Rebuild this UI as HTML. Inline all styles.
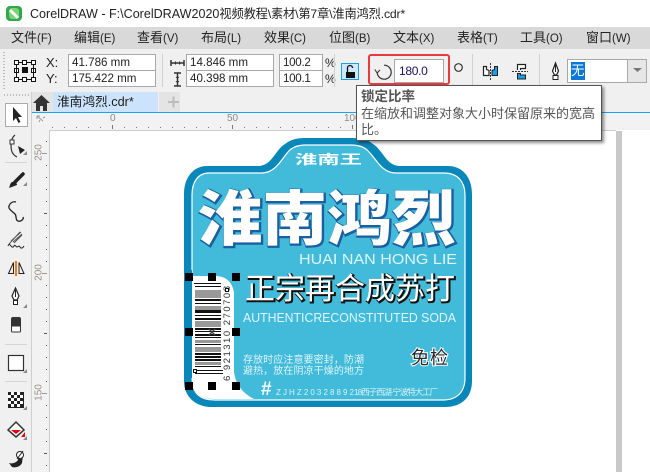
<!DOCTYPE html>
<html><head><meta charset="utf-8">
<style>
html,body{margin:0;padding:0;background:#fff}
#r{position:relative;width:650px;height:472px;overflow:hidden;background:#fff;font-family:"Liberation Sans","Noto Sans CJK SC",sans-serif;color:#222}
#r div{position:absolute;box-sizing:border-box}
.t{white-space:nowrap;font-size:13px;line-height:16px}
.m{top:30px;color:#222;font-size:13px}
.m span{font-size:11.5px}
.i{background:#fff;border:1px solid #a8a8a8;font-size:11.6px;line-height:15px;padding-left:3px;white-space:nowrap;color:#222}
svg{position:absolute;left:0;top:0}
</style></head><body>
<div id="r">
<!-- title -->
<div style="left:0;top:0;width:650px;height:27px;background:#fff"></div>
<div class="t" style="left:30px;top:6px;font-size:12.25px;letter-spacing:-.17px;color:#222"><span style="font-size:12.55px;letter-spacing:0">CorelDRAW - F:\CorelDRAW2020</span>视频教程\素材\第7章\淮南鸿烈.cdr*</div>
<!-- menu -->
<div style="left:0;top:27px;width:650px;height:22px;background:#d9d9d9"></div>
<div class="t m" style="left:11px">文件<span>(F)</span></div>
<div class="t m" style="left:74px">编辑<span>(E)</span></div>
<div class="t m" style="left:137px">查看<span>(V)</span></div>
<div class="t m" style="left:201px">布局<span>(L)</span></div>
<div class="t m" style="left:264px">效果<span>(C)</span></div>
<div class="t m" style="left:329px">位图<span>(B)</span></div>
<div class="t m" style="left:393px">文本<span>(X)</span></div>
<div class="t m" style="left:457px">表格<span>(T)</span></div>
<div class="t m" style="left:520px">工具<span>(O)</span></div>
<div class="t m" style="left:586px">窗口<span>(W)</span></div>
<!-- prop bar -->
<div style="left:0;top:49px;width:650px;height:43px;background:#f0f0f0"></div>
<div class="t" style="left:46px;top:55px">X:</div>
<div class="t" style="left:46px;top:71px">Y:</div>
<div class="i" style="left:68px;top:54px;width:88px;height:17px">41.786 mm</div>
<div class="i" style="left:68px;top:70px;width:88px;height:17px">175.422 mm</div>
<div class="i" style="left:186px;top:54px;width:88px;height:17px">14.846 mm</div>
<div class="i" style="left:186px;top:70px;width:88px;height:17px">40.398 mm</div>
<div class="i" style="left:279px;top:54px;width:44px;height:17px;letter-spacing:-.3px">100.2</div>
<div class="i" style="left:279px;top:70px;width:44px;height:17px;letter-spacing:-.3px">100.1</div>
<div class="t" style="left:325px;top:55px;font-size:12px">%</div>
<div class="t" style="left:325px;top:71px;font-size:12px">%</div>
<div style="left:341px;top:63px;width:18px;height:17px;background:#cde8fb;border:1px solid #1a9fe0"></div>
<div style="left:368px;top:54px;width:82px;height:31px;border:2px solid #ea3a3f;border-radius:3px;background:#f0f0f0"></div>
<div class="i" style="left:394px;top:59px;width:50px;height:24px;line-height:22px;padding-left:4px;font-size:12px;letter-spacing:-.3px;color:#1a1060">180.0</div>
<div style="left:567px;top:59px;width:61px;height:24px;background:#fff;border:1px solid #a8a8a8"></div>
<div class="t" style="left:571px;top:62px;width:14px;height:18px;background:#0a78d7;color:#fff;line-height:18px;font-size:13.5px">无</div>
<div style="left:628px;top:59px;width:19px;height:24px;background:#e6e6e6;border:1px solid #a8a8a8;border-left:0"></div>
<!-- tabs -->
<div style="left:0;top:92px;width:650px;height:21px;background:#f0f0f0"></div>
<div style="left:32px;top:92px;width:21px;height:20px;background:#e4e4e4"></div>
<div style="left:53px;top:92px;width:105px;height:20px;background:#cce4fb"></div>
<div class="t" style="left:57px;top:94px;font-size:12.7px;color:#1a1a1a">淮南鸿烈.cdr*</div>
<div style="left:159px;top:92px;width:21px;height:20px;background:#e4e4e4"></div>
<div style="left:32px;top:112px;width:618px;height:1px;background:#18a4ee"></div>
<!-- rulers -->
<div style="left:0;top:113px;width:32px;height:359px;background:#f0f0f0"></div>
<div style="left:32px;top:113px;width:618px;height:17px;background:#f2f2f2"></div>
<div style="left:32px;top:113px;width:17px;height:359px;background:#f2f2f2"></div>
<div style="left:31px;top:92px;width:1px;height:380px;background:#cfcfcf"></div>
<div style="left:49px;top:130px;width:601px;height:342px;background:#fff"></div>
<div style="left:49px;top:130px;width:1px;height:342px;background:#cccccc"></div>
<div style="left:49px;top:130px;width:567px;height:1px;background:#cccccc"></div>
<div style="left:616px;top:131px;width:6px;height:341px;background:#c9c9c9"></div>
<div class="t" style="left:110px;top:113px;font-size:10px;line-height:11px;color:#8a8a8a">0</div>
<div class="t" style="left:227px;top:113px;font-size:10px;line-height:11px;color:#8a8a8a">50</div>
<div class="t" style="left:344px;top:113px;font-size:10px;line-height:11px;color:#8a8a8a">100</div>
<div class="t" style="left:24px;top:147px;width:30px;text-align:center;font-size:10px;line-height:11px;color:#9a8f8f;transform:rotate(-90deg)">250</div>
<div class="t" style="left:24px;top:267px;width:30px;text-align:center;font-size:10px;line-height:11px;color:#9a8f8f;transform:rotate(-90deg)">200</div>
<div class="t" style="left:24px;top:387px;width:30px;text-align:center;font-size:10px;line-height:11px;color:#9a8f8f;transform:rotate(-90deg)">150</div>

<svg width="650" height="472" viewBox="0 0 650 472" style="font-family:'Liberation Sans','Noto Sans CJK SC',sans-serif">
<!-- app icon -->
<rect x="6" y="6" width="16" height="15" rx="4" fill="#2fa84a"/>
<rect x="9" y="8" width="10" height="11" rx="3" fill="#7fd07a"/>
<path d="M10 10L18 18" stroke="#fff" stroke-width="3"/>
<!-- grip -->
<path d="M4 52V90" stroke="#bdbdbd" stroke-dasharray="1 2" stroke-width="2"/>
<path d="M4 95H30" stroke="#bdbdbd" stroke-dasharray="1 2" stroke-width="2"/>
<!-- reference point -->
<g fill="#fff" stroke="#111" stroke-width="1">
<rect x="14.5" y="60.5" width="4" height="4"/><rect x="22.5" y="60.5" width="4" height="4"/><rect x="31.5" y="60.5" width="4" height="4"/>
<rect x="14.5" y="68.5" width="4" height="4"/><rect x="31.5" y="68.5" width="4" height="4"/>
<rect x="14.5" y="77.5" width="4" height="4"/><rect x="22.5" y="77.5" width="4" height="4"/><rect x="31.5" y="77.5" width="4" height="4"/>
</g>
<rect x="22" y="67" width="6" height="6" fill="#111"/>
<path d="M18.500 62.500H22.500M26.500 62.500H31.500M16.500 64.500V77.500M33.500 64.500V77.500M18.500 79.500H22.500M26.500 79.500H31.500" stroke="#111"/>
<path d="M162.500 54V87M334.500 54V87M472.500 54V87M539.500 54V87" stroke="#d0d0d0"/>
<!-- size icons -->
<path d="M171 60V66M184 60V66M171 63H184" stroke="#333" stroke-width="1.500"/>
<path d="M174 63l2-2v4zM181 63l-2-2v4z" fill="#333"/>
<path d="M174 73H181M174 86H181M177.500 73V86" stroke="#333" stroke-width="1.500"/>
<path d="M177.500 76l-2 2h4zM177.500 83l-2-2h4z" fill="#333"/>
<!-- lock -->
<rect x="346" y="72" width="9" height="6" fill="#111"/>
<path d="M347.500 72V68a2.500 2.500 0 0 1 5 0" fill="none" stroke="#111" stroke-width="1.300"/>
<!-- rotate -->
<path d="M384 65.200A7 7 0 1 1 377.200 72" fill="none" stroke="#333" stroke-width="1.200"/>
<path d="M374.800 69.500L377.200 73L380 69.800" fill="none" stroke="#333" stroke-width="1.100"/>
<circle cx="458.500" cy="67.500" r="3.800" fill="none" stroke="#333" stroke-width="1.200"/>
<!-- mirror -->
<path d="M483.500 66.500h3v3l2.500 1v5h-5.500z" fill="#fff" stroke="#222" stroke-width="1.200"/>
<path d="M497.500 66.500h-3v3l-2.500 1v5h5.500z" fill="#18a0e8" stroke="#222" stroke-width="1"/>
<path d="M490.500 63V80" stroke="#333" stroke-dasharray="2 1"/>
<path d="M517.500 70V64.500h8v4h-5v1.500" fill="#fff" stroke="#222" stroke-width="1.200"/>
<path d="M517.500 73.500v5.500h8v-4h-5v-1.500z" fill="#18a0e8" stroke="#222" stroke-width="1"/>
<path d="M512 71.500H528" stroke="#333" stroke-dasharray="2 1"/>
<!-- pen nib -->
<path d="M555.500 63l-3 8 2 4h2l2-4z" fill="#fff" stroke="#222" stroke-width="1.200"/>
<path d="M555.500 65V72" stroke="#222"/>
<rect x="553" y="75.500" width="5" height="4" fill="#fff" stroke="#222"/>
<path d="M633 68h9l-4.500 4z" fill="#777"/>
<!-- home -->
<path d="M41.500 95L33 103h3v8h4v-5h3v5h4v-8h3z" fill="#333"/>
<rect x="168" y="101" width="11" height="2" fill="#bdbdbd"/>
<rect x="172.500" y="96.500" width="2" height="11" fill="#bdbdbd"/>
<!-- ruler ticks -->
<g stroke="#555" stroke-width="1">
<path d="M112.500 125V129M232.500 125V129M352.500 125V129" stroke="#777"/>
<path d="M52 127.500h1M64 127.500h1M76 127.500h1M88 127.500h1M100 127.500h1M124 127.500h1M136 127.500h1M148 127.500h1M160 127.500h1M172 127.500h1M184 127.500h1M196 127.500h1M208 127.500h1M220 127.500h1M244 127.500h1M256 127.500h1M268 127.500h1M280 127.500h1M292 127.500h1M304 127.500h1M316 127.500h1M328 127.500h1M340 127.500h1M364 127.500h1" stroke="#777"/>
<path d="M42 153.500h5M42 273.500h5M42 393.500h5" stroke="#999"/>
<path d="M46 141.500h1M46 165.500h1M46 177.500h1M46 189.500h1M46 201.500h1M44 213.500h3M46 225.500h1M46 237.500h1M46 249.500h1M46 261.500h1M46 285.500h1M46 297.500h1M46 309.500h1M46 321.500h1M44 333.500h3M46 345.500h1M46 357.500h1M46 369.500h1M46 381.500h1M46 405.500h1M46 417.500h1M46 429.500h1M46 441.500h1M44 453.500h3M46 465.500h1" stroke="#555"/>
</g>
<path d="M37 116l6 5M37 116h3M37 116v3M40 120l-1 2M43 118l2-1" stroke="#999" fill="none"/>
<!-- toolbox -->
<rect x="5.500" y="103.500" width="22" height="23" fill="#fff" stroke="#aaa"/>
<path d="M13 107v14l3-3 2.500 5 2-1-2.500-5h4z" fill="#222"/>
<g fill="none" stroke="#333" stroke-width="1.200">
<path d="M15 135c-4 3-5 10-3 17c1 2 3 4 5 5"/>
</g>
<rect x="10" y="140" width="4" height="4" fill="#fff" stroke="#333"/>
<path d="M18 146l7 4-5 4z" fill="#222"/>
<path d="M27 155v-4l-4 4zM27 186v-4l-4 4zM27 308v-4l-4 4zM27 373v-4l-4 4zM27 410v-4l-4 4zM27 440v-4l-4 4z" fill="#888"/>
<path d="M5 162.500H27M5 344.500H27M5 381.500H27" stroke="#d4d4d4"/>
<path d="M23 174l-8 8" stroke="#222" stroke-width="3.500" stroke-linecap="round"/>
<path d="M12 182c3-1 5 1 5 3l-8 3c1-2 1-5 3-6z" fill="#222"/>
<path d="M16 202c-3-1-6 1-7 4c-1 3 3 5 6 8c2 2 0 6 3 7c3 1 6-2 5-4" fill="none" stroke="#222" stroke-width="1.300"/>
<path d="M9 244l11-12M11 241l10-9M13 242l9-8M14 243l8-8" stroke="#555"/>
<path d="M8 246c1-3 2-1 3 0s2 2 3 0 2 1 3 1 2-2 3 0 3 1 4-1" fill="none" stroke="#222"/>
<path d="M8.500 273.500l5-11v11zM24 273.500l-5-11v11z" fill="none" stroke="#222"/>
<rect x="15" y="261" width="2" height="15" fill="#f07a1a"/>
<path d="M15.500 288l-3.500 8 2 4h3l2-4z" fill="#fff" stroke="#222" stroke-width="1.200"/><path d="M15.500 290V297" stroke="#222"/>
<rect x="13.500" y="300.500" width="4" height="4" fill="#fff" stroke="#222"/>
<path d="M11 319a2 2 0 0 1 2-2h6a2 2 0 0 1 2 2v7H11z" fill="#333"/>
<path d="M11.500 326h9v5a1 1 0 0 1-1 1h-7a1 1 0 0 1-1-1z" fill="#fff" stroke="#333"/>
<rect x="8.500" y="355.500" width="15" height="15" fill="#fff" stroke="#333" stroke-width="1.200"/>
<rect x="8" y="392" width="16" height="16" fill="#222"/>
<path d="M11 392h3v3h-3zM17 392h3v3h-3zM8 395h3v3H8zM14 395h3v3h-3zM20 395h3v3h-3zM11 398h3v3h-3zM17 398h3v3h-3zM8 401h3v3H8zM14 401h3v3h-3zM20 401h3v3h-3zM11 404h3v3h-3zM17 404h3v3h-3z" fill="#fff"/>
<path d="M8 430l8-8 8 8-8 7z" fill="#fff" stroke="#333" stroke-width="1.500"/>
<path d="M11 430h10l-5 4z" fill="#e00000"/><path d="M21 437l4-5v5z" fill="#f00000"/>
<path d="M9 463c3 1 7 0 9-3l1-7 3-1 1 3-1 8c-2 4-7 5-10 4z" fill="#222"/>
<circle cx="20" cy="455" r="3.500" fill="#fff" stroke="#222"/>
<path d="M17 459l6-8" stroke="#222"/>
<!-- label -->
<path id="o" d="M207 166H258C272 166 275 150 285 144C290 140 296 138 305 138H352C362 138 368 140 373 144C383 150 386 166 400 166H448C463 166 472 178 472 194V381C472 398 461 407 445 407H212C195 407 184 396 184 381V194C184 178 193 166 207 166Z" fill="#0987b9"/>
<path d="M209 173H262C275 173 281 160 288 152C292 147 299 145 306 145H351C358 145 365 147 369 152C377 160 382 173 396 173H444C458 173 465 182 465 195V378C465 392 457 400 443 400H214C199 400 192 392 192 378V195C192 182 198 173 209 173Z" fill="#41bbd9" stroke="#fff" stroke-width="1.200"/>
<!-- white barcode panel -->
<path d="M192 276H216C226 276 233 283 234 293V372C236 386 244 394 254 399H214C199 399 192 392 192 378Z" fill="#fff"/>
<path d="M184 270H192V381C192 392 199 400 214 400V407H212C195 407 184 396 184 381Z" fill="#0987b9"/>
<path d="M192 378C192 392 199 400 214 400" fill="none" stroke="#fff"/>
<!-- heading -->
<text x="295" y="164" font-size="13" font-weight="700" fill="#fff" textLength="67" lengthAdjust="spacingAndGlyphs" font-family="'Noto Sans CJK SC',sans-serif">淮南王</text>
<text x="199" y="241" font-size="60" font-weight="900" fill="#1a5fa0" stroke="#1a5fa0" stroke-width="2.600" textLength="258" lengthAdjust="spacingAndGlyphs" font-family="'Noto Sans CJK SC',sans-serif">淮南鸿烈</text>
<text x="198" y="240" font-size="60" font-weight="900" fill="#fff" textLength="258" lengthAdjust="spacingAndGlyphs" font-family="'Noto Sans CJK SC',sans-serif">淮南鸿烈</text>
<text x="299" y="264" font-size="14.500" fill="#dff5fa" textLength="158" lengthAdjust="spacingAndGlyphs">HUAI NAN HONG LIE</text>
<text x="246" y="300" font-size="30" fill="#111" stroke="#111" stroke-width="2" textLength="210" lengthAdjust="spacingAndGlyphs" font-family="'Noto Sans CJK SC',sans-serif">正宗再合成苏打</text>
<text x="245" y="299" font-size="30" fill="#fff" textLength="210" lengthAdjust="spacingAndGlyphs" font-family="'Noto Sans CJK SC',sans-serif">正宗再合成苏打</text>
<text x="243" y="322" font-size="13" fill="#dff5fa" textLength="213" lengthAdjust="spacingAndGlyphs">AUTHENTICRECONSTITUTED SODA</text>
<text x="243" y="363" font-size="10" fill="#dff5fa" textLength="121" lengthAdjust="spacing">存放时应注意要密封，防潮</text>
<text x="243" y="374" font-size="10" fill="#dff5fa" textLength="121" lengthAdjust="spacing">避热，放在阴凉干燥的地方</text>
<text x="411" y="364" font-size="18" fill="#fff" stroke="#fff" stroke-width="2" textLength="37" lengthAdjust="spacing">免检</text>
<text x="411" y="364" font-size="18" fill="#2a2a2a" textLength="37" lengthAdjust="spacing">免检</text>
<text x="261" y="395" font-size="19" font-weight="700" fill="#fff">#</text>
<text x="276" y="395" font-size="8" fill="#d8f2f8" textLength="78" lengthAdjust="spacing">ZJHZ20328892</text>
<text x="354" y="395" font-size="8.500" fill="#d8f2f8" textLength="84" lengthAdjust="spacing">18西子西湖·宁波特大工厂</text>
<!-- barcode -->
<g fill="#111">
<rect x="194" y="283" width="27" height="1"/><rect x="195" y="286" width="26" height="1"/>
<rect x="195" y="290" width="26" height="8" fill="#999"/><rect x="195" y="299" width="26" height="2"/>
<rect x="195" y="303" width="26" height="1"/><rect x="195" y="306" width="26" height="4" fill="#999"/>
<rect x="195" y="310" width="26" height="3"/><rect x="195" y="315" width="26" height="1"/>
<rect x="195" y="318" width="26" height="2"/><rect x="195" y="321" width="26" height="6" fill="#999"/>
<rect x="195" y="328" width="26" height="2"/><rect x="195" y="331" width="26" height="1"/>
<rect x="195" y="334" width="26" height="2"/><rect x="195" y="337" width="26" height="1"/>
<rect x="195" y="340" width="26" height="3" fill="#999"/><rect x="195" y="344" width="26" height="1"/>
<rect x="195" y="347" width="26" height="5" fill="#999"/><rect x="195" y="353" width="26" height="2"/>
<rect x="195" y="356" width="26" height="2"/><rect x="195" y="359" width="26" height="2"/>
<rect x="195" y="362" width="26" height="3" fill="#999"/><rect x="195" y="366" width="26" height="1"/>
<rect x="195" y="370" width="28" height="1"/><rect x="195" y="373" width="28" height="1"/>
</g>
<text transform="translate(230 381) rotate(-90)" font-size="9.500" fill="#333" textLength="95" lengthAdjust="spacing">6 921310 270708</text>
<!-- handles -->
<g fill="#000">
<rect x="185" y="273" width="8" height="8"/><rect x="208" y="273" width="8" height="8"/><rect x="232" y="273" width="8" height="8"/>
<rect x="185" y="328" width="8" height="8"/><rect x="232" y="328" width="8" height="8"/>
<rect x="185" y="382" width="8" height="8"/><rect x="208" y="382" width="8" height="8"/><rect x="232" y="382" width="8" height="8"/>
</g>
<path d="M209 329l6 6M215 329l-6 6" stroke="#444" stroke-width="1.500"/>
<rect x="193.500" y="369.500" width="3" height="3" fill="#fff" stroke="#111"/>
<rect x="225.500" y="288.500" width="3" height="3" fill="#fff" stroke="#111"/>
</svg>
<!-- tooltip -->
<div style="left:356px;top:85px;width:246px;height:56px;background:#fff;border:1px solid #555;box-shadow:2px 2px 3px rgba(0,0,0,.45)"></div>
<div class="t" style="left:361px;top:89px;font-size:13.5px;font-weight:700;line-height:16px;color:#555">锁定比率</div>
<div class="t" style="left:361px;top:106px;font-size:13px;line-height:16px;color:#555">在缩放和调整对象大小时保留原来的宽高</div>
<div class="t" style="left:361px;top:122px;font-size:13px;line-height:16px;color:#555">比。</div>
</div>
</body></html>
